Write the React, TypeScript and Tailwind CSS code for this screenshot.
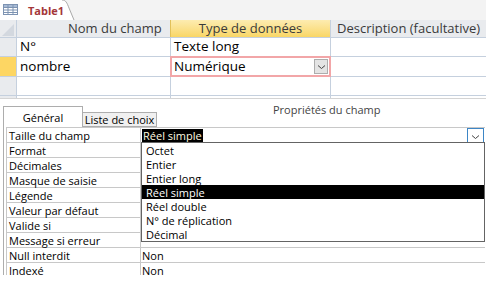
import React from 'react'

const props = [
  ['Taille du champ', ''],
  ['Format', ''],
  ['Décimales', ''],
  ['Masque de saisie', ''],
  ['Légende', ''],
  ['Valeur par défaut', ''],
  ['Valide si', ''],
  ['Message si erreur', ''],
  ['Null interdit', 'Non'],
  ['Indexé', 'Non'],
]

const sizes = ['Octet', 'Entier', 'Entier long', 'Réel simple', 'Réel double', 'N° de réplication', 'Décimal']

function Chevron() {
  return (
    <svg width="9" height="6" viewBox="0 0 9 6" className="w-[9px] h-[6px] shrink-0">
      <path d="M1 1.5 L4.5 4.5 L8 1.5" fill="none" stroke="#444" strokeWidth="1" />
    </svg>
  )
}

export default function App() {
  return (
    <div className="relative w-[486px] h-[286px] overflow-hidden bg-white font-['Open_Sans',sans-serif] text-black whitespace-nowrap">
      {/* document tab strip */}
      <div className="relative h-[20px] bg-[#f3f3f3]">
        <svg width="80" height="20" viewBox="0 0 80 20" className="absolute left-0 top-0 w-[80px] h-[20px]">
          <path d="M0 0 H62 C66 0 67 3 69 8 L74 20 H0 Z" fill="#fff" />
          <path d="M62 0 C66 0 67 3 69 8 L74 20" fill="none" stroke="#a8a8a8" />
          {/* table icon */}
          <rect x="3.5" y="4.5" width="14" height="10" fill="#fff" stroke="#7d93b2" />
          <rect x="4" y="5" width="13" height="2.5" fill="#a9bcd6" />
          <path d="M3.5 7.5 H17.5 M3.5 10 H17.5 M3.5 12.5 H17.5 M8 4.5 V14.5 M13 4.5 V14.5" stroke="#7d93b2" strokeWidth="1" />
        </svg>
        <div className="relative flex items-center h-full pl-[28px]">
          <span className="text-[11px] font-bold text-[#a4373a] leading-none">Table1</span>
        </div>
      </div>

      {/* datasheet (design view) */}
      <div className="flex h-[18px] bg-[#e9ebee] border-b border-[#c5d0de] text-[13px] text-[#3a3a3a] leading-none">
        <div className="relative w-[16px]">
          <svg width="14" height="14" className="absolute left-[1px] top-[3px] w-[14px] h-[14px]">
            <path d="M13 1 L13 13 L1 13 Z" fill="#d3d8df" />
          </svg>
        </div>
        <div className="w-[154px] border-l border-[#c5d0de] flex items-center pl-[51px]">Nom du champ</div>
        <div className="w-[160px] border-l border-[#e2c15a] flex items-center justify-center bg-gradient-to-b from-[#fdecb0] to-[#f9d664]">
          Type de données
        </div>
        <div className="flex-1 border-l border-[#c5d0de] flex items-center pl-[6px]">
          Description (facultative)
        </div>
      </div>

      {[
        { name: 'N°', type: 'Texte long', active: false, h: 'h-[19px]' },
        { name: 'nombre', type: 'Numérique', active: true, h: 'h-[20px]' },
        { name: '', type: '', active: false, h: 'h-[19px]' },
      ].map((r, i) => (
        <div key={i} className={`flex ${r.h} border-b border-[#c5d0de] text-[13.5px] leading-none`}>
          <div className={`w-[16px] ${r.active ? 'bg-[#fdd663]' : 'bg-[#e9ebee]'}`} />
          <div className="w-[154px] border-l border-[#c5d0de] flex items-center pl-[3px]">{r.name}</div>
          {r.active ? (
            <div className="w-[161px] -mr-[1px] border-2 border-[#f2a6a8] flex items-center pl-[2px] relative z-10 -mt-[1px] h-[21px]">
              <span>{r.type}</span>
              <div className="ml-auto mr-[1px] w-[14px] h-[15px] bg-[#e4e4e4] border border-[#adadad] flex items-center justify-center">
                <Chevron />
              </div>
            </div>
          ) : (
            <div className="w-[160px] border-l border-[#c5d0de] flex items-center pl-[3px]">{r.type}</div>
          )}
          <div className="flex-1 border-l border-[#c5d0de]" />
        </div>
      ))}
      <div className="flex h-[3px] border-b border-[#d4d4d4]">
        <div className="w-[16px] bg-[#e9ebee]" />
        <div className="w-[154px] border-l border-[#c5d0de]" />
        <div className="w-[160px] border-l border-[#c5d0de]" />
        <div className="flex-1 border-l border-[#c5d0de]" />
      </div>

      {/* field properties */}
      <div className="flex items-end h-[28px] pl-[3px]">
        <div className="w-[80px] h-[21px] border border-b-0 border-[#adadad] bg-white flex items-center justify-center text-[11px] leading-none">
          Général
        </div>
        <div className="w-[74px] h-[15px] border border-l-0 border-[#adadad] bg-[#f0f0f0] flex items-center justify-center text-[11px] leading-none overflow-hidden">
          Liste de choix
        </div>
        <div className="self-start mt-[5px] ml-[116px] text-[11px] leading-none text-[#444]">Propriétés du champ</div>
      </div>
      <div className="ml-[3px] h-[148px] border-l border-[#adadad] overflow-hidden">
        <div className="ml-[2px] mr-[1px] border-l border-t border-[#c8c8c8]">
          {props.map(([label, value], i) => (
            <div key={label} className="flex h-[15px] border-b border-[#c8c8c8] text-[11px] leading-none">
              <div className="w-[134px] border-r border-[#c8c8c8] flex items-center pl-[2px]">{label}</div>
              <div className="flex-1 flex items-center pl-[1px]">
                {i === 0 ? (
                  <>
                    <span className="bg-black text-[#fffbe0] px-[1px] h-[13px] flex items-center">Réel simple</span>
                    <div className="ml-auto mr-[1px] w-[17px] h-[15px] border border-[#3d86c6] bg-white flex items-end justify-center pb-[2px]">
                      <Chevron />
                    </div>
                  </>
                ) : (
                  value
                )}
              </div>
            </div>
          ))}
        </div>
      </div>

      {/* open combo list */}
      <div className="absolute left-[141px] top-[142px] w-[344px] h-[100px] border border-[#646464] bg-white text-[11px] leading-none">
        {sizes.map((s) => (
          <div
            key={s}
            className={`h-[14px] flex items-center pl-[4px] ${s === 'Réel simple' ? 'bg-black text-white' : ''}`}
          >
            {s}
          </div>
        ))}
      </div>
    </div>
  )
}
